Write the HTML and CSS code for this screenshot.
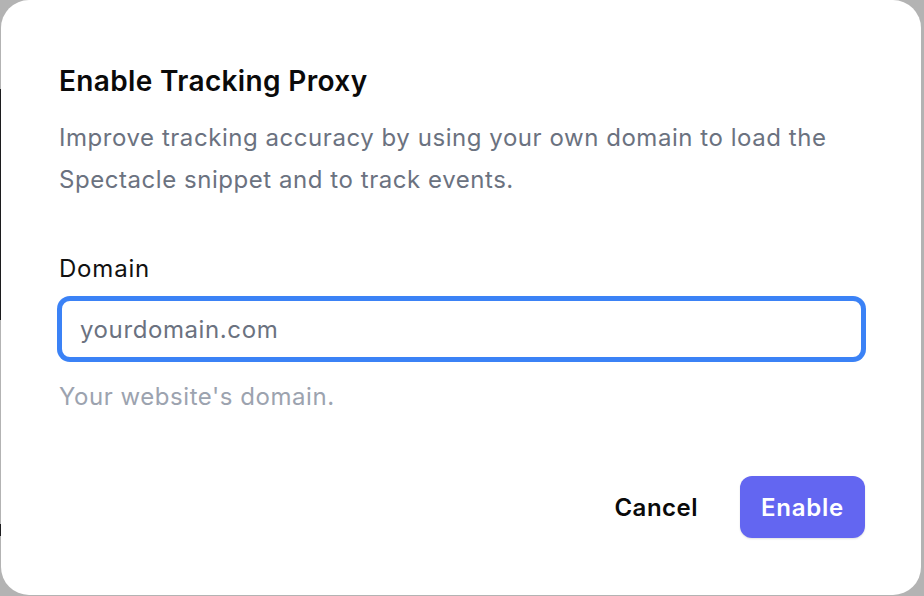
FILE: index.html
```html
<!DOCTYPE html>
<html lang="en">
<head>
<meta charset="utf-8">
<title>Enable Tracking Proxy</title>
<link rel="stylesheet" href="styles.css">
</head>
<body>
<div class="backdrop">
  <div class="modal" role="dialog" aria-labelledby="modal-title">
    <h2 class="title" id="modal-title">Enable Tracking Proxy</h2>
    <p class="description">Improve tracking accuracy by using your own domain to load the Spectacle snippet and to track events.</p>
    <label class="label" for="domain">Domain</label>
    <input class="input" id="domain" type="text" placeholder="yourdomain.com">
    <p class="helper">Your website's domain.</p>
    <div class="actions">
      <button class="btn btn-cancel" type="button">Cancel</button>
      <button class="btn btn-primary" type="button">Enable</button>
    </div>
  </div>
</div>
</body>
</html>
```

FILE: styles.css
```css
* { box-sizing: border-box; }
html, body { margin: 0; padding: 0; }
body {
  width: 924px;
  height: 596px;
  overflow: hidden;
  font-family: Inter, "Noto Sans", sans-serif;
  background:
    linear-gradient(#1c1c1e, #1c1c1e) 0 89px / 1px 231px no-repeat,
    linear-gradient(#1c1c1e, #1c1c1e) 0 524px / 1px 12px no-repeat,
    #b3b3b3;
}
.backdrop {
  display: flex;
  padding: 0 3px 1px 1px;
  height: 596px;
}
.modal {
  flex: 1;
  background: #ffffff;
  border-radius: 28px;
  padding: 63px 56px 57px 58px;
  display: flex;
  flex-direction: column;
}
.title {
  margin: 0;
  font-size: 28px;
  line-height: 36px;
  font-weight: 600;
  color: #0a0a0a;
  letter-spacing: 0.35px;
}
.description {
  margin: 18px 0 0;
  font-size: 24px;
  line-height: 42px;
  color: #6b7280;
  letter-spacing: 0.55px;
}
.label {
  margin-top: 52px;
  font-size: 24px;
  line-height: 32px;
  font-weight: 400;
  color: #111111;
  letter-spacing: 0.8px;
}
.input {
  margin: 13px 1px 0 0;
  height: 62px;
  border: 3px solid #3b82f6;
  box-shadow: 0 0 0 2px #3b82f6;
  border-radius: 11px;
  padding: 0 18px;
  font-family: inherit;
  font-size: 24px;
  letter-spacing: 0.6px;
  color: #111;
  outline: none;
  background: #fff;
}
.input::placeholder { color: #6b7280; }
.helper {
  margin: 21px 0 0;
  font-size: 24px;
  line-height: 32px;
  color: #9ca3af;
  letter-spacing: 0.55px;
}
.actions {
  margin-top: 63px;
  display: flex;
  justify-content: flex-end;
  align-items: center;
  gap: 20px;
}
.btn {
  font-family: inherit;
  font-size: 24px;
  font-weight: 600;
  height: 62px;
  border: none;
  border-radius: 12px;
  padding: 0 22px;
  cursor: pointer;
}
.btn-cancel {
  background: transparent;
  color: #0a0a0a;
  letter-spacing: 0.5px;
}
.btn-primary {
  background: #6366f1;
  color: #ffffff;
  padding: 0 21px;
  letter-spacing: 0.75px;
  box-shadow: 0 1px 2px rgba(0, 0, 0, 0.12);
}
```
